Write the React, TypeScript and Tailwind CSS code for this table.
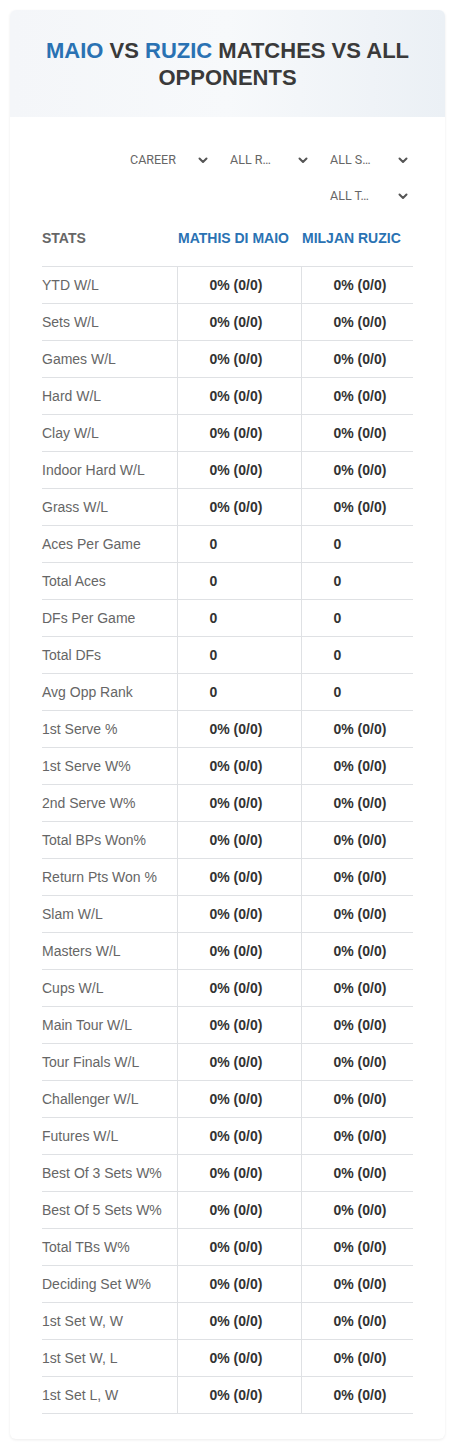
import React from 'react';

const rows: [string, string][] = [
  ['YTD W/L', '0% (0/0)'],
  ['Sets W/L', '0% (0/0)'],
  ['Games W/L', '0% (0/0)'],
  ['Hard W/L', '0% (0/0)'],
  ['Clay W/L', '0% (0/0)'],
  ['Indoor Hard W/L', '0% (0/0)'],
  ['Grass W/L', '0% (0/0)'],
  ['Aces Per Game', '0'],
  ['Total Aces', '0'],
  ['DFs Per Game', '0'],
  ['Total DFs', '0'],
  ['Avg Opp Rank', '0'],
  ['1st Serve %', '0% (0/0)'],
  ['1st Serve W%', '0% (0/0)'],
  ['2nd Serve W%', '0% (0/0)'],
  ['Total BPs Won%', '0% (0/0)'],
  ['Return Pts Won %', '0% (0/0)'],
  ['Slam W/L', '0% (0/0)'],
  ['Masters W/L', '0% (0/0)'],
  ['Cups W/L', '0% (0/0)'],
  ['Main Tour W/L', '0% (0/0)'],
  ['Tour Finals W/L', '0% (0/0)'],
  ['Challenger W/L', '0% (0/0)'],
  ['Futures W/L', '0% (0/0)'],
  ['Best Of 3 Sets W%', '0% (0/0)'],
  ['Best Of 5 Sets W%', '0% (0/0)'],
  ['Total TBs W%', '0% (0/0)'],
  ['Deciding Set W%', '0% (0/0)'],
  ['1st Set W, W', '0% (0/0)'],
  ['1st Set W, L', '0% (0/0)'],
  ['1st Set L, W', '0% (0/0)'],
];

const Chevron = () => (
  <svg width="10" height="7" viewBox="0 0 10 7" className="shrink-0">
    <path d="M1.5 1.5 L5 5 L8.5 1.5" fill="none" stroke="#555" strokeWidth="2" strokeLinecap="round" strokeLinejoin="round" />
  </svg>
);

const Select = ({ label }: { label: string }) => (
  <div className="w-[95px] h-[36px] flex items-center justify-between pl-[14px] pr-[3px] text-[12.5px] text-[#666]" style={{ fontFamily: 'Roboto, sans-serif' }}>
    <span>{label}</span>
    <Chevron />
  </div>
);

export default function App() {
  return (
    <div className="min-h-[1448px] bg-white pt-[10px] px-[10px]" style={{ fontFamily: '"Liberation Sans", Arial, sans-serif' }}>
      <div className="rounded-[6px] shadow-[0_1px_3px_rgba(0,0,0,0.08)] pb-[25px]">
        <div className="h-[107px] rounded-t-[6px] bg-gradient-to-r from-[#f4f6f9] via-[#f7f9fb] to-[#ebf0f5] flex items-center justify-center px-[26px]">
          <h1 className="text-center text-[22px] leading-[27px] font-bold text-[#3a3a3a]">
            <span className="text-[#2a72b3]">MAIO</span> VS <span className="text-[#2a72b3]">RUZIC</span> MATCHES VS ALL OPPONENTS
          </h1>
        </div>

        <div className="px-[32px] pt-[25px]">
          <div className="flex flex-wrap justify-end gap-x-[5px] pr-[2px]">
            <Select label="CAREER" />
            <Select label="ALL R…" />
            <Select label="ALL S…" />
            <Select label="ALL T…" />
          </div>

          <table className="w-full mt-[6px] border-collapse text-[14px]">
            <thead>
              <tr className="h-[46px] font-bold text-left">
                <th className="w-[135px] text-[#666] align-top pt-[8px]">STATS</th>
                <th className="w-[124px] text-[#2a72b3] pl-[1px] align-top pt-[8px]">MATHIS DI MAIO</th>
                <th className="text-[#2a72b3] pl-[1px] align-top pt-[8px]">MILJAN RUZIC</th>
              </tr>
            </thead>
            <tbody>
              {rows.map(([label, value]) => (
                <tr key={label} className="h-[37px] border-t border-b border-[#dfe1e4]">
                  <td className="text-[#666] pt-[2px]">{label}</td>
                  <td className="border-l border-[#dfe1e4] pl-[32px] pt-[2px] font-bold text-[#333]">{value}</td>
                  <td className="border-l border-[#dfe1e4] pl-[32px] pt-[2px] font-bold text-[#333]">{value}</td>
                </tr>
              ))}
            </tbody>
          </table>
        </div>
      </div>
    </div>
  );
}
